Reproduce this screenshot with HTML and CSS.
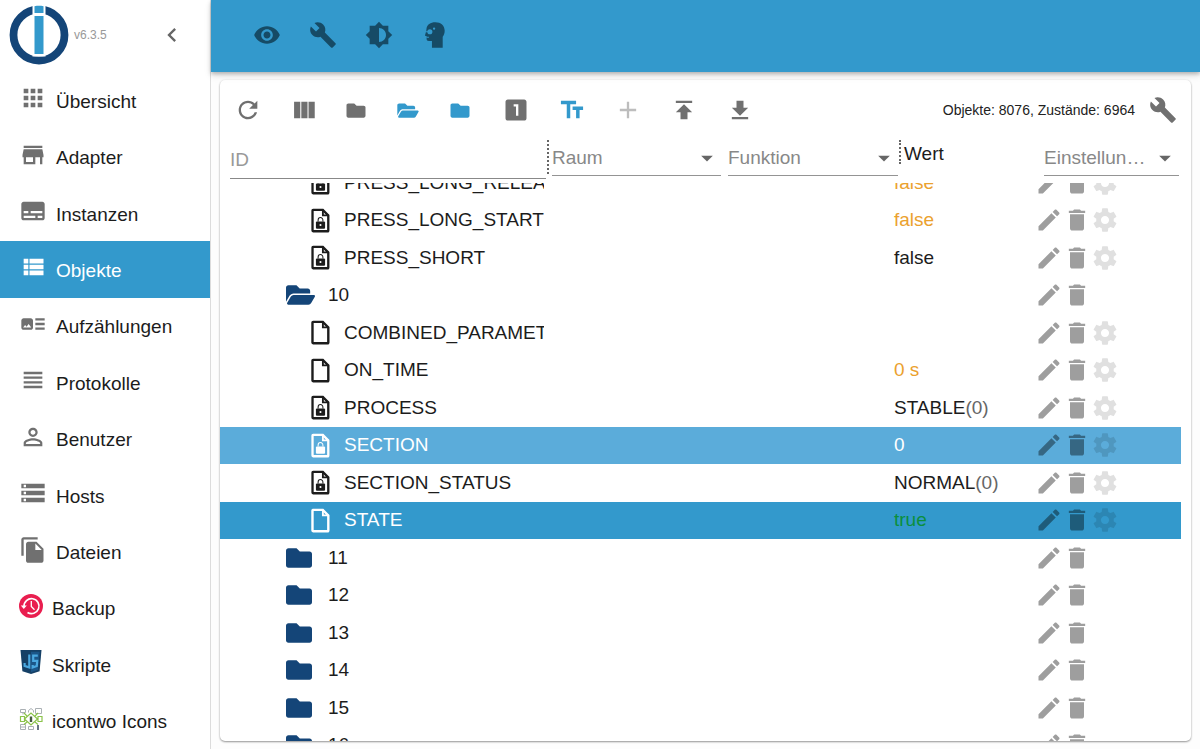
FILE: index.html
```html
<!DOCTYPE html>
<html lang="de">
<head>
<meta charset="utf-8">
<meta name="viewport" content="width=device-width, initial-scale=1">
<title>Objekte</title>
<link rel="stylesheet" href="styles.css">
</head>
<body>
<svg class="sprite" aria-hidden="true">
  <symbol id="apps" viewBox="0 0 24 24"><path d="M4 8h4V4H4v4zm6 12h4v-4h-4v4zm-6 0h4v-4H4v4zm0-6h4v-4H4v4zm6 0h4v-4h-4v4zm6-10v4h4V4h-4zm-6 4h4V4h-4v4zm6 6h4v-4h-4v4zm0 6h4v-4h-4v4z"/></symbol>
  <symbol id="store" viewBox="0 0 24 24"><path d="M20 4H4v2h16V4zm1 10v-2l-1-5H4l-1 5v2h1v6h10v-6h4v6h2v-6h1zm-9 4H6v-4h6v4z"/></symbol>
  <symbol id="subtitles" viewBox="0 0 24 24"><path d="M20 4H4c-1.100 0-2 .9-2 2v12c0 1.100.9 2 2 2h16c1.100 0 2-.9 2-2V6c0-1.100-.9-2-2-2zM4 12h4v2H4v-2zm10 6H4v-2h10v2zm6 0h-4v-2h4v2zm0-4H10v-2h10v2z"/></symbol>
  <symbol id="viewlist" viewBox="0 0 24 24"><path d="M4 14h4v-4H4v4zm0 5h4v-4H4v4zM4 9h4V5H4v4zm5 5h12v-4H9v4zm0 5h12v-4H9v4zM9 5v4h12V5H9z"/></symbol>
  <symbol id="arttrack" viewBox="0 0 24 24"><path d="M22 13h-8v-2h8v2zm0-6h-8v2h8V7zm-8 10h8v-2h-8v2zm-2-8v6c0 1.100-.9 2-2 2H4c-1.100 0-2-.9-2-2V9c0-1.100.9-2 2-2h6c1.100 0 2 .9 2 2zm-1.500 6l-2.250-3-1.750 2.260-1.250-1.510L3.500 15h7z"/></symbol>
  <symbol id="headline" viewBox="0 0 24 24"><path d="M4 15h16v-2H4v2zm0 4h16v-2H4v2zm0-8h16V9H4v2zm0-6v2h16V5H4z"/></symbol>
  <symbol id="person" viewBox="0 0 24 24"><path d="M12 5.900c1.160 0 2.100.94 2.100 2.100s-.94 2.100-2.100 2.100S9.900 9.160 9.900 8s.94-2.100 2.100-2.100m0 9c2.970 0 6.100 1.460 6.100 2.100v1.100H5.900V17c0-.64 3.130-2.100 6.100-2.100M12 4C9.790 4 8 5.790 8 8s1.790 4 4 4 4-1.790 4-4-1.790-4-4-4zm0 9c-2.670 0-8 1.340-8 4v3h16v-3c0-2.660-5.330-4-8-4z"/></symbol>
  <symbol id="storage" viewBox="0 0 24 24"><path d="M2 20h20v-4H2v4zm2-3h2v2H4v-2zM2 4v4h20V4H2zm4 3H4V5h2v2zm-4 7h20v-4H2v4zm2-3h2v2H4v-2z"/></symbol>
  <symbol id="copy" viewBox="0 0 24 24"><path d="M16 1H4c-1.100 0-2 .9-2 2v14h2V3h12V1zm-1 4l6 6v10c0 1.100-.9 2-2 2H7.990C6.890 23 6 22.100 6 21l.01-14c0-1.100.89-2 1.990-2h7zm-1 7h5.500L14 6.500V12z"/></symbol>
  <symbol id="chevron" viewBox="0 0 24 24"><path d="M15.410 7.410L14 6l-6 6 6 6 1.410-1.410L10.830 12z"/></symbol>
  <symbol id="eye" viewBox="0 0 24 24"><path d="M12 4.500C7 4.500 2.730 7.610 1 12c1.730 4.390 6 7.500 11 7.500s9.270-3.110 11-7.500c-1.730-4.390-6-7.500-11-7.500zM12 17c-2.760 0-5-2.240-5-5s2.240-5 5-5 5 2.240 5 5-2.240 5-5 5zm0-8c-1.660 0-3 1.340-3 3s1.340 3 3 3 3-1.340 3-3-1.340-3-3-3z"/></symbol>
  <symbol id="wrench" viewBox="0 0 24 24"><path d="M22.700 19l-9.100-9.100c.9-2.300.4-5-1.500-6.900-2-2-5-2.400-7.400-1.300L9 6 6 9 1.600 4.700C.4 7.100.9 10.100 2.900 12.100c1.900 1.900 4.600 2.400 6.900 1.500l9.100 9.100c.4.4 1 .4 1.400 0l2.300-2.300c.5-.4.5-1.100.1-1.400z"/></symbol>
  <symbol id="bright" viewBox="0 0 24 24"><path d="M20 15.310L23.310 12 20 8.690V4h-4.690L12 .69 8.690 4H4v4.690L.69 12 4 15.310V20h4.690L12 23.310 15.310 20H20v-4.690zM12 18V6c3.310 0 6 2.690 6 6s-2.690 6-6 6z"/></symbol>
  <symbol id="head" viewBox="0 0 24 24"><path fill-rule="evenodd" d="M12.300 1C8 1 5.200 3 4.700 6.600L4.500 8.500 3.500 12c-.1.600.2.900.8.900h.5v2.300c0 1.400.6 1.900 1.900 1.900h2.700V23h9.200v-9.500c1.100-1.400 1.700-3.100 1.700-5.200C20.300 3.800 17 1 12.300 1zM7.600 7a2.200 2.200 0 1 1 0 4.400 2.200 2.200 0 0 1 0-4.400zm3.600-1.500a1 1 0 1 1 0 2 1 1 0 0 1 0-2z"/><path class="cutout" d="M4.200 8.700h2v1h-2zM4.600 13.400h2.200v.9H4.600z"/></symbol>
  <symbol id="refresh" viewBox="0 0 24 24"><path d="M17.650 6.350C16.200 4.900 14.210 4 12 4c-4.420 0-7.990 3.580-7.990 8s3.570 8 7.990 8c3.730 0 6.840-2.550 7.730-6h-2.080c-.82 2.330-3.040 4-5.650 4-3.310 0-6-2.690-6-6s2.690-6 6-6c1.660 0 3.140.69 4.220 1.780L13 11h7V4l-2.350 2.350z"/></symbol>
  <symbol id="columns" viewBox="0 0 24 24"><path d="M3.500 5h5.300v14H3.500zM9.700 5H15v14H9.700zM15.900 5h5.300v14h-5.300z"/></symbol>
  <symbol id="folder" viewBox="0 0 512 512"><path d="M464 128H272l-64-64H48C21.490 64 0 85.490 0 112v288c0 26.510 21.490 48 48 48h416c26.510 0 48-21.490 48-48V176c0-26.510-21.490-48-48-48z"/></symbol>
  <symbol id="folderopen" viewBox="0 0 576 512"><path d="M572.694 292.093L500.270 416.248A63.997 63.997 0 0 1 444.989 448H45.025c-18.523 0-30.064-20.093-20.731-36.093l72.424-124.155A64 64 0 0 1 152 256h399.964c18.523 0 30.064 20.093 20.730 36.093zM152 224h328v-48c0-26.510-21.490-48-48-48H272l-64-64H48C21.490 64 0 85.490 0 112v278.046l69.077-118.418C86.214 242.250 117.989 224 152 224z"/></symbol>
  <symbol id="one" viewBox="0 0 24 24"><path d="M19 3H5c-1.100 0-2 .9-2 2v14c0 1.100.9 2 2 2h14c1.100 0 2-.9 2-2V5c0-1.100-.9-2-2-2zm-5 14h-2V9h-2V7h4v10z"/></symbol>
  <symbol id="textsize" viewBox="0 0 24 24"><path d="M2.500 4v3h5v12h3V7h5V4h-13zm19 5h-9v3h3v7h3v-7h3V9z"/></symbol>
  <symbol id="plus" viewBox="0 0 24 24"><path d="M19 13h-6v6h-2v-6H5v-2h6V5h2v6h6v2z"/></symbol>
  <symbol id="upload" viewBox="0 0 24 24"><path d="M5 4v2h14V4H5zm0 10h4v6h6v-6h4l-7-7-7 7z"/></symbol>
  <symbol id="download" viewBox="0 0 24 24"><path d="M19 10h-4V4H9v6H5l7 7 7-7zM5 18v2h14v-2H5z"/></symbol>
  <symbol id="caret" viewBox="0 0 24 24"><path d="M7 10l5 5 5-5z"/></symbol>
  <symbol id="edit" viewBox="0 0 24 24"><path d="M3 17.250V21h3.750L17.810 9.940l-3.750-3.750L3 17.250zM20.710 7.040c.39-.39.39-1.020 0-1.410l-2.340-2.340c-.39-.39-1.020-.39-1.410 0l-1.830 1.830 3.750 3.750 1.830-1.830z"/></symbol>
  <symbol id="trash" viewBox="0 0 24 24"><path d="M6 19c0 1.100.9 2 2 2h8c1.100 0 2-.9 2-2V7H6v12zM19 4h-3.500l-1-1h-5l-1 1H5v2h14V4z"/></symbol>
  <symbol id="gear" viewBox="0 0 24 24"><path d="M19.430 12.980c.04-.32.07-.64.07-.98s-.03-.66-.07-.98l2.110-1.650c.19-.15.24-.42.12-.64l-2-3.460c-.12-.22-.39-.3-.61-.22l-2.490 1c-.52-.4-1.080-.73-1.690-.98l-.38-2.650C14.460 2.180 14.250 2 14 2h-4c-.25 0-.46.18-.49.42l-.38 2.650c-.61.25-1.170.59-1.690.98l-2.490-1c-.23-.09-.49 0-.61.22l-2 3.460c-.13.22-.07.49.12.64l2.110 1.650c-.04.32-.07.65-.07.98s.03.66.07.98l-2.110 1.650c-.19.15-.24.42-.12.64l2 3.460c.12.22.39.3.61.22l2.490-1c.52.4 1.080.73 1.690.98l.38 2.650c.03.24.24.42.49.42h4c.25 0 .46-.18.49-.42l.38-2.650c.61-.25 1.170-.59 1.690-.98l2.490 1c.23.09.49 0 .61-.22l2-3.460c.12-.22.07-.49-.12-.64l-2.110-1.650zM12 15.500c-1.930 0-3.500-1.570-3.500-3.500s1.570-3.500 3.500-3.500 3.500 1.570 3.500 3.500-1.570 3.500-3.500 3.500z"/></symbol>
  <symbol id="file" viewBox="0 0 18 24"><path d="M1.900 1.800h9.300l5.300 5.300v14.600a.6.600 0 0 1-.6.600h-14a.6.600 0 0 1-.6-.6V2.400a.6.600 0 0 1 .6-.6z" fill="none" stroke="currentColor" stroke-width="2.300"/><path d="M10.400 1.500v6.500h6.400V6.200h-4.600V1.500z"/></symbol>
  <symbol id="filelock" viewBox="0 0 18 24"><use href="#file"/><rect x="4.600" y="13" width="8.800" height="7" rx="1"/><path d="M6.700 13v-1.500a2.300 2.300 0 0 1 4.600 0V13" fill="none" stroke="currentColor"/><circle class="keyhole" cx="9" cy="16.300" r="1"/></symbol>
</svg>

<div class="app">
  <aside class="drawer">
    <div class="brand">
      <svg class="logo" viewBox="0 0 60 60" role="img" aria-label="Logo">
        <circle cx="30" cy="30" r="25.500" fill="none" stroke="#144578" stroke-width="7.800"/>
        <path d="M23.500 0h13v14h-13zM23.500 45h13v6.500h-13z" fill="#fff"/>
        <path d="M25.500 1.200c3-.5 6-.5 9 0V8h-9zM25.500 11h9v38h-9z" fill="#3399cc"/>
      </svg>
      <span class="version">v6.3.5</span>
      <button class="collapse" aria-label="Menü einklappen"><svg class="icon"><use href="#chevron"/></svg></button>
    </div>
    <nav class="menu">
      <a class="item" href="#"><svg class="icon"><use href="#apps"/></svg><span>Übersicht</span></a>
      <a class="item" href="#"><svg class="icon"><use href="#store"/></svg><span>Adapter</span></a>
      <a class="item" href="#"><svg class="icon"><use href="#subtitles"/></svg><span>Instanzen</span></a>
      <a class="item active" href="#" aria-current="page"><svg class="icon"><use href="#viewlist"/></svg><span>Objekte</span></a>
      <a class="item" href="#"><svg class="icon"><use href="#arttrack"/></svg><span>Aufzählungen</span></a>
      <a class="item" href="#"><svg class="icon"><use href="#headline"/></svg><span>Protokolle</span></a>
      <a class="item" href="#"><svg class="icon"><use href="#person"/></svg><span>Benutzer</span></a>
      <a class="item" href="#"><svg class="icon"><use href="#storage"/></svg><span>Hosts</span></a>
      <a class="item" href="#"><svg class="icon"><use href="#copy"/></svg><span>Dateien</span></a>
      <a class="item" href="#"><svg class="plugin" viewBox="0 0 24 24"><circle cx="12" cy="12" r="12" fill="#e91e4f"/><path d="M5 12.500A7.500 7.500 0 1 1 8.500 18.500" fill="none" stroke="#fff" stroke-width="1.700"/><path d="M1.800 11.500h6L4.800 15z" fill="#fff"/><path d="M12.300 7v5.500l3.200 3.200" fill="none" stroke="#fff" stroke-width="1.300"/></svg><span>Backup</span></a>
      <a class="item" href="#"><svg class="plugin" viewBox="0 0 24 24"><path d="M1.500 0h21l-1.900 21.300L12 24l-8.600-2.700z" fill="#154066"/><path d="M12 1.800h8.600L19 20l-7 2.200z" fill="#1b5688"/><path d="M10.300 4.500v13l-4.700-1.600v-3M18.800 5.600h-4.600v5.200h4l-.4 5.200-4.100 1.500v-2.500" fill="none" stroke="#4aa8e0" stroke-width="2.200"/></svg><span>Skripte</span></a>
      <a class="item" href="#"><svg class="plugin" viewBox="0 0 24 24"><g fill="none" stroke="#aab0b4"><path d="M1.500 2.500h5v3h-5zM4 5.500v2M16.500 1.500h6v5h-6zM9.500 5.500V3.500L12 1.500l2.500 2v2M1.500 17.500h5v5h-5zM1.500 20h5M9.500 19.500h5v3h-5z"/></g><g fill="none" stroke="#8bc34a" stroke-width="1.200"><path d="M5.500 12L12 6l6.500 6-6.500 6zM1.500 9.500h4v5h-4zM19 9.500h4v5h-4zM8 9L5 6M16 9l3-3M8 15l-3 2.500M16 15l3 2.500"/></g><path d="M10.800 9.500h2.400v5.500h-2.400z" fill="#455a40"/><path d="M19 18v5" stroke="#445566" stroke-width="1.600"/></svg><span>icontwo Icons</span></a>
    </nav>
  </aside>

  <div class="content">
    <header class="appbar">
      <button class="tool" aria-label="Sichtbarkeit"><svg class="icon"><use href="#eye"/></svg></button>
      <button class="tool" aria-label="Systemeinstellungen"><svg class="icon"><use href="#wrench"/></svg></button>
      <button class="tool" aria-label="Farbthema"><svg class="icon"><use href="#bright"/></svg></button>
      <button class="tool" aria-label="Expertenmodus"><svg class="icon"><use href="#head"/></svg></button>
    </header>

    <main class="panel">
      <div class="toolbar">
        <button class="tool" aria-label="Aktualisieren"><svg class="icon"><use href="#refresh"/></svg></button>
        <button class="tool" aria-label="Spalten"><svg class="icon"><use href="#columns"/></svg></button>
        <button class="tool narrow" aria-label="Alle zuklappen"><svg class="small"><use href="#folder"/></svg></button>
        <button class="tool on" aria-label="Alle aufklappen"><svg class="small"><use href="#folderopen"/></svg></button>
        <button class="tool narrow on" aria-label="Eine Ebene zuklappen"><svg class="small"><use href="#folder"/></svg></button>
        <div class="group">
          <button class="tool" aria-label="Eine Ebene aufklappen"><svg class="icon"><use href="#one"/></svg></button>
          <button class="tool on" aria-label="Beschreibungen"><svg class="icon"><use href="#textsize"/></svg></button>
          <button class="tool" aria-label="Hinzufügen" disabled><svg class="icon"><use href="#plus"/></svg></button>
          <button class="tool" aria-label="Hochladen"><svg class="icon"><use href="#upload"/></svg></button>
          <button class="tool" aria-label="Herunterladen"><svg class="icon"><use href="#download"/></svg></button>
        </div>
        <span class="stats">Objekte: 8076, Zustände: 6964</span>
        <button class="tool" aria-label="Konfigurieren"><svg class="icon"><use href="#wrench"/></svg></button>
      </div>

      <div class="filters">
        <input class="idfilter" type="text" placeholder="ID" aria-label="ID">
        <span class="grip tall"></span>
        <div class="pick room"><select aria-label="Raum"><option>Raum</option></select><svg class="icon"><use href="#caret"/></svg></div>
        <div class="pick function"><select aria-label="Funktion"><option>Funktion</option></select><svg class="icon"><use href="#caret"/></svg></div>
        <span class="grip"></span>
        <span class="valuehead">Wert</span>
        <div class="pick"><select aria-label="Einstellungen"><option>Einstellun…</option></select><svg class="icon"><use href="#caret"/></svg></div>
      </div>

      <div class="viewport">
        <table class="tree" aria-label="Objekte">
          <colgroup><col class="c-name"><col><col class="c-value"><col class="c-actions"></colgroup>
          <tbody>
            <tr><td><div class="name leaf"><svg><use href="#filelock"/></svg><span>PRESS_LONG_RELEA</span></div></td><td></td><td class="pending">false</td><td><div class="actions"><button aria-label="Bearbeiten"><svg class="icon"><use href="#edit"/></svg></button><button aria-label="Löschen"><svg class="icon"><use href="#trash"/></svg></button><button class="faint" aria-label="Einstellungen"><svg class="icon"><use href="#gear"/></svg></button></div></td></tr>
            <tr><td><div class="name leaf"><svg><use href="#filelock"/></svg><span>PRESS_LONG_START</span></div></td><td></td><td class="pending">false</td><td><div class="actions"><button aria-label="Bearbeiten"><svg class="icon"><use href="#edit"/></svg></button><button aria-label="Löschen"><svg class="icon"><use href="#trash"/></svg></button><button class="faint" aria-label="Einstellungen"><svg class="icon"><use href="#gear"/></svg></button></div></td></tr>
            <tr><td><div class="name leaf"><svg><use href="#filelock"/></svg><span>PRESS_SHORT</span></div></td><td></td><td>false</td><td><div class="actions"><button aria-label="Bearbeiten"><svg class="icon"><use href="#edit"/></svg></button><button aria-label="Löschen"><svg class="icon"><use href="#trash"/></svg></button><button class="faint" aria-label="Einstellungen"><svg class="icon"><use href="#gear"/></svg></button></div></td></tr>
            <tr><td><div class="name branch open"><svg><use href="#folderopen"/></svg><span>10</span></div></td><td></td><td></td><td><div class="actions"><button aria-label="Bearbeiten"><svg class="icon"><use href="#edit"/></svg></button><button aria-label="Löschen"><svg class="icon"><use href="#trash"/></svg></button></div></td></tr>
            <tr><td><div class="name leaf"><svg><use href="#file"/></svg><span>COMBINED_PARAMET</span></div></td><td></td><td></td><td><div class="actions"><button aria-label="Bearbeiten"><svg class="icon"><use href="#edit"/></svg></button><button aria-label="Löschen"><svg class="icon"><use href="#trash"/></svg></button><button class="faint" aria-label="Einstellungen"><svg class="icon"><use href="#gear"/></svg></button></div></td></tr>
            <tr><td><div class="name leaf"><svg><use href="#file"/></svg><span>ON_TIME</span></div></td><td></td><td class="pending">0 s</td><td><div class="actions"><button aria-label="Bearbeiten"><svg class="icon"><use href="#edit"/></svg></button><button aria-label="Löschen"><svg class="icon"><use href="#trash"/></svg></button><button class="faint" aria-label="Einstellungen"><svg class="icon"><use href="#gear"/></svg></button></div></td></tr>
            <tr><td><div class="name leaf"><svg><use href="#filelock"/></svg><span>PROCESS</span></div></td><td></td><td>STABLE<span class="raw">(0)</span></td><td><div class="actions"><button aria-label="Bearbeiten"><svg class="icon"><use href="#edit"/></svg></button><button aria-label="Löschen"><svg class="icon"><use href="#trash"/></svg></button><button class="faint" aria-label="Einstellungen"><svg class="icon"><use href="#gear"/></svg></button></div></td></tr>
            <tr class="hover"><td><div class="name leaf"><svg><use href="#filelock"/></svg><span>SECTION</span></div></td><td></td><td>0</td><td><div class="actions"><button aria-label="Bearbeiten"><svg class="icon"><use href="#edit"/></svg></button><button aria-label="Löschen"><svg class="icon"><use href="#trash"/></svg></button><button class="faint" aria-label="Einstellungen"><svg class="icon"><use href="#gear"/></svg></button></div></td></tr>
            <tr><td><div class="name leaf"><svg><use href="#filelock"/></svg><span>SECTION_STATUS</span></div></td><td></td><td>NORMAL<span class="raw">(0)</span></td><td><div class="actions"><button aria-label="Bearbeiten"><svg class="icon"><use href="#edit"/></svg></button><button aria-label="Löschen"><svg class="icon"><use href="#trash"/></svg></button><button class="faint" aria-label="Einstellungen"><svg class="icon"><use href="#gear"/></svg></button></div></td></tr>
            <tr class="selected"><td><div class="name leaf"><svg><use href="#file"/></svg><span>STATE</span></div></td><td></td><td class="fresh">true</td><td><div class="actions"><button aria-label="Bearbeiten"><svg class="icon"><use href="#edit"/></svg></button><button aria-label="Löschen"><svg class="icon"><use href="#trash"/></svg></button><button class="faint" aria-label="Einstellungen"><svg class="icon"><use href="#gear"/></svg></button></div></td></tr>
            <tr><td><div class="name branch"><svg><use href="#folder"/></svg><span>11</span></div></td><td></td><td></td><td><div class="actions"><button aria-label="Bearbeiten"><svg class="icon"><use href="#edit"/></svg></button><button aria-label="Löschen"><svg class="icon"><use href="#trash"/></svg></button></div></td></tr>
            <tr><td><div class="name branch"><svg><use href="#folder"/></svg><span>12</span></div></td><td></td><td></td><td><div class="actions"><button aria-label="Bearbeiten"><svg class="icon"><use href="#edit"/></svg></button><button aria-label="Löschen"><svg class="icon"><use href="#trash"/></svg></button></div></td></tr>
            <tr><td><div class="name branch"><svg><use href="#folder"/></svg><span>13</span></div></td><td></td><td></td><td><div class="actions"><button aria-label="Bearbeiten"><svg class="icon"><use href="#edit"/></svg></button><button aria-label="Löschen"><svg class="icon"><use href="#trash"/></svg></button></div></td></tr>
            <tr><td><div class="name branch"><svg><use href="#folder"/></svg><span>14</span></div></td><td></td><td></td><td><div class="actions"><button aria-label="Bearbeiten"><svg class="icon"><use href="#edit"/></svg></button><button aria-label="Löschen"><svg class="icon"><use href="#trash"/></svg></button></div></td></tr>
            <tr><td><div class="name branch"><svg><use href="#folder"/></svg><span>15</span></div></td><td></td><td></td><td><div class="actions"><button aria-label="Bearbeiten"><svg class="icon"><use href="#edit"/></svg></button><button aria-label="Löschen"><svg class="icon"><use href="#trash"/></svg></button></div></td></tr>
            <tr><td><div class="name branch"><svg><use href="#folder"/></svg><span>16</span></div></td><td></td><td></td><td><div class="actions"><button aria-label="Bearbeiten"><svg class="icon"><use href="#edit"/></svg></button><button aria-label="Löschen"><svg class="icon"><use href="#trash"/></svg></button></div></td></tr>
          </tbody>
        </table>
      </div>
    </main>
  </div>
</div>
</body>
</html>
```
FILE: styles.css
```css
* { box-sizing: border-box; }

body {
  margin: 0;
  background: #fdfdfd;
  color: #1c1c1c;
  font-family: "Liberation Sans", Arial, Helvetica, sans-serif;
  font-size: 19px;
  line-height: 24px;
}

svg { display: block; flex: none; fill: currentColor; }
.sprite { position: absolute; width: 0; height: 0; }
.icon { width: 28px; height: 28px; }
.small { width: 22px; height: 19px; }
.cutout { fill: #3399cc; }

button {
  display: flex;
  align-items: center;
  justify-content: center;
  margin: 0;
  padding: 0;
  border: 0;
  background: none;
  color: inherit;
  font: inherit;
}

.app { display: flex; height: 100vh; overflow: hidden; }

/* Drawer */
.drawer {
  display: flex;
  flex: none;
  flex-direction: column;
  width: 211px;
  border-right: 1px solid #dcdcdc;
  background: #fff;
}
.brand {
  display: flex;
  flex: none;
  align-items: center;
  height: 72px;
  padding: 0 24px 2px 9px;
}
.logo { width: 60px; height: 60px; }
.version { margin-left: 5px; color: #999; font-size: 12px; line-height: 16px; }
.collapse { margin-left: auto; color: #666; }

.menu {
  display: grid;
  flex: 1;
  grid-auto-rows: 1fr;
  min-height: 0;
  max-height: 677px;
}
.item {
  display: flex;
  align-items: center;
  gap: 9px;
  padding-left: 19px;
  color: #1c1c1c;
  text-decoration: none;
}
.item svg { margin-bottom: 4px; color: #707070; }
.item span { padding-top: 3px; }
.item.active { background: #3399cc; color: #fff; }
.item.active svg { color: #fff; }
.plugin { width: 24px; height: 24px; }

/* Content */
.content { display: flex; flex: 1; flex-direction: column; min-width: 0; }
.appbar {
  z-index: 1;
  display: flex;
  flex: none;
  align-items: center;
  height: 72px;
  padding: 0 28px 2px;
  background: #3399cc;
  color: #164b66;
  box-shadow: 0 2px 4px rgba(0, 0, 0, .25), 0 4px 8px rgba(0, 0, 0, .08);
}
.tool { flex: none; width: 56px; height: 56px; }
.tool.narrow { width: 48px; }
.tool.on { color: #3399cc; }
.tool:disabled { color: #bdbdbd; }

.panel {
  display: flex;
  flex: 1;
  flex-direction: column;
  min-height: 0;
  margin: 8px 9px 8px;
  border-radius: 5px;
  background: #fff;
  box-shadow: 0 1px 2px rgba(0, 0, 0, .4), 0 0 3px rgba(0, 0, 0, .06);
  overflow: hidden;
}
.toolbar { display: flex; flex: none; align-items: center; height: 60px; color: #707070; }
.group { display: flex; margin-left: 4px; }
.stats { margin-left: auto; color: #222; font-size: 14px; line-height: 20px; }

/* Column filters */
.filters {
  display: grid;
  flex: none;
  grid-template-columns: 316px 6px 1fr 1fr 6px 140px 135px;
  height: 43px;
  padding: 0 12px 0 10px;
}
.idfilter {
  height: 39px;
  min-width: 0;
  padding: 2px 0 0;
  border: 0;
  border-bottom: 1px solid #888;
  border-radius: 0;
  background: none;
  color: inherit;
  font: inherit;
}
.idfilter::placeholder { color: #999; opacity: 1; }
.grip { height: 24px; margin-left: 1px; border-left: 2px dotted #666; }
.grip.tall { height: 34px; }
.pick {
  display: grid;
  align-items: center;
  height: 36px;
  min-width: 0;
  border-bottom: 1px solid #949494;
}
.pick.room { margin-right: 4px; }
.pick.function { margin-left: 3px; }
.pick select {
  grid-area: 1 / 1;
  width: 100%;
  min-width: 0;
  height: 35px;
  margin: 0;
  padding: 0;
  border: 0;
  border-radius: 0;
  background: none;
  color: #888;
  font: inherit;
  appearance: none;
}
.pick .icon { grid-area: 1 / 1; justify-self: end; color: #666; pointer-events: none; }
.valuehead { padding-top: 2px; }

/* Object tree */
.viewport { flex: 1; min-height: 0; margin-right: 10px; overflow: hidden; }
.tree {
  width: 100%;
  height: 600px;
  margin-top: -19px;
  border-collapse: collapse;
  table-layout: fixed;
}
.c-name { width: 324px; }
.c-value { width: 140px; }
.c-actions { width: 147px; }
.tree td { padding: 0; white-space: nowrap; vertical-align: middle; }
.name { display: flex; align-items: center; overflow: hidden; }
.leaf { padding-left: 91px; }
.leaf svg { width: 19px; height: 25px; margin-right: 14px; }
.branch { padding-left: 66px; }
.branch svg { width: 26px; height: 26px; margin-right: 16px; color: #144578; }
.branch.open svg { width: 29px; margin-right: 13px; }
.keyhole { fill: #fff; }
.actions { display: flex; padding-left: 1px; color: #9e9e9e; }
.actions .faint { color: #e0e0e0; }
.pending { color: #eba12e; }
.fresh { color: #0b8f3c; }
.raw { color: #666; }

.hover { background: #5bacda; color: #fff; }
.selected { background: #3399cc; }
.selected .name { color: #fff; }
.hover .actions, .selected .actions { color: rgba(0, 0, 0, .4); }
.hover .faint, .selected .faint { color: rgba(0, 0, 0, .12); }
.hover .keyhole { fill: #5bacda; }
```
